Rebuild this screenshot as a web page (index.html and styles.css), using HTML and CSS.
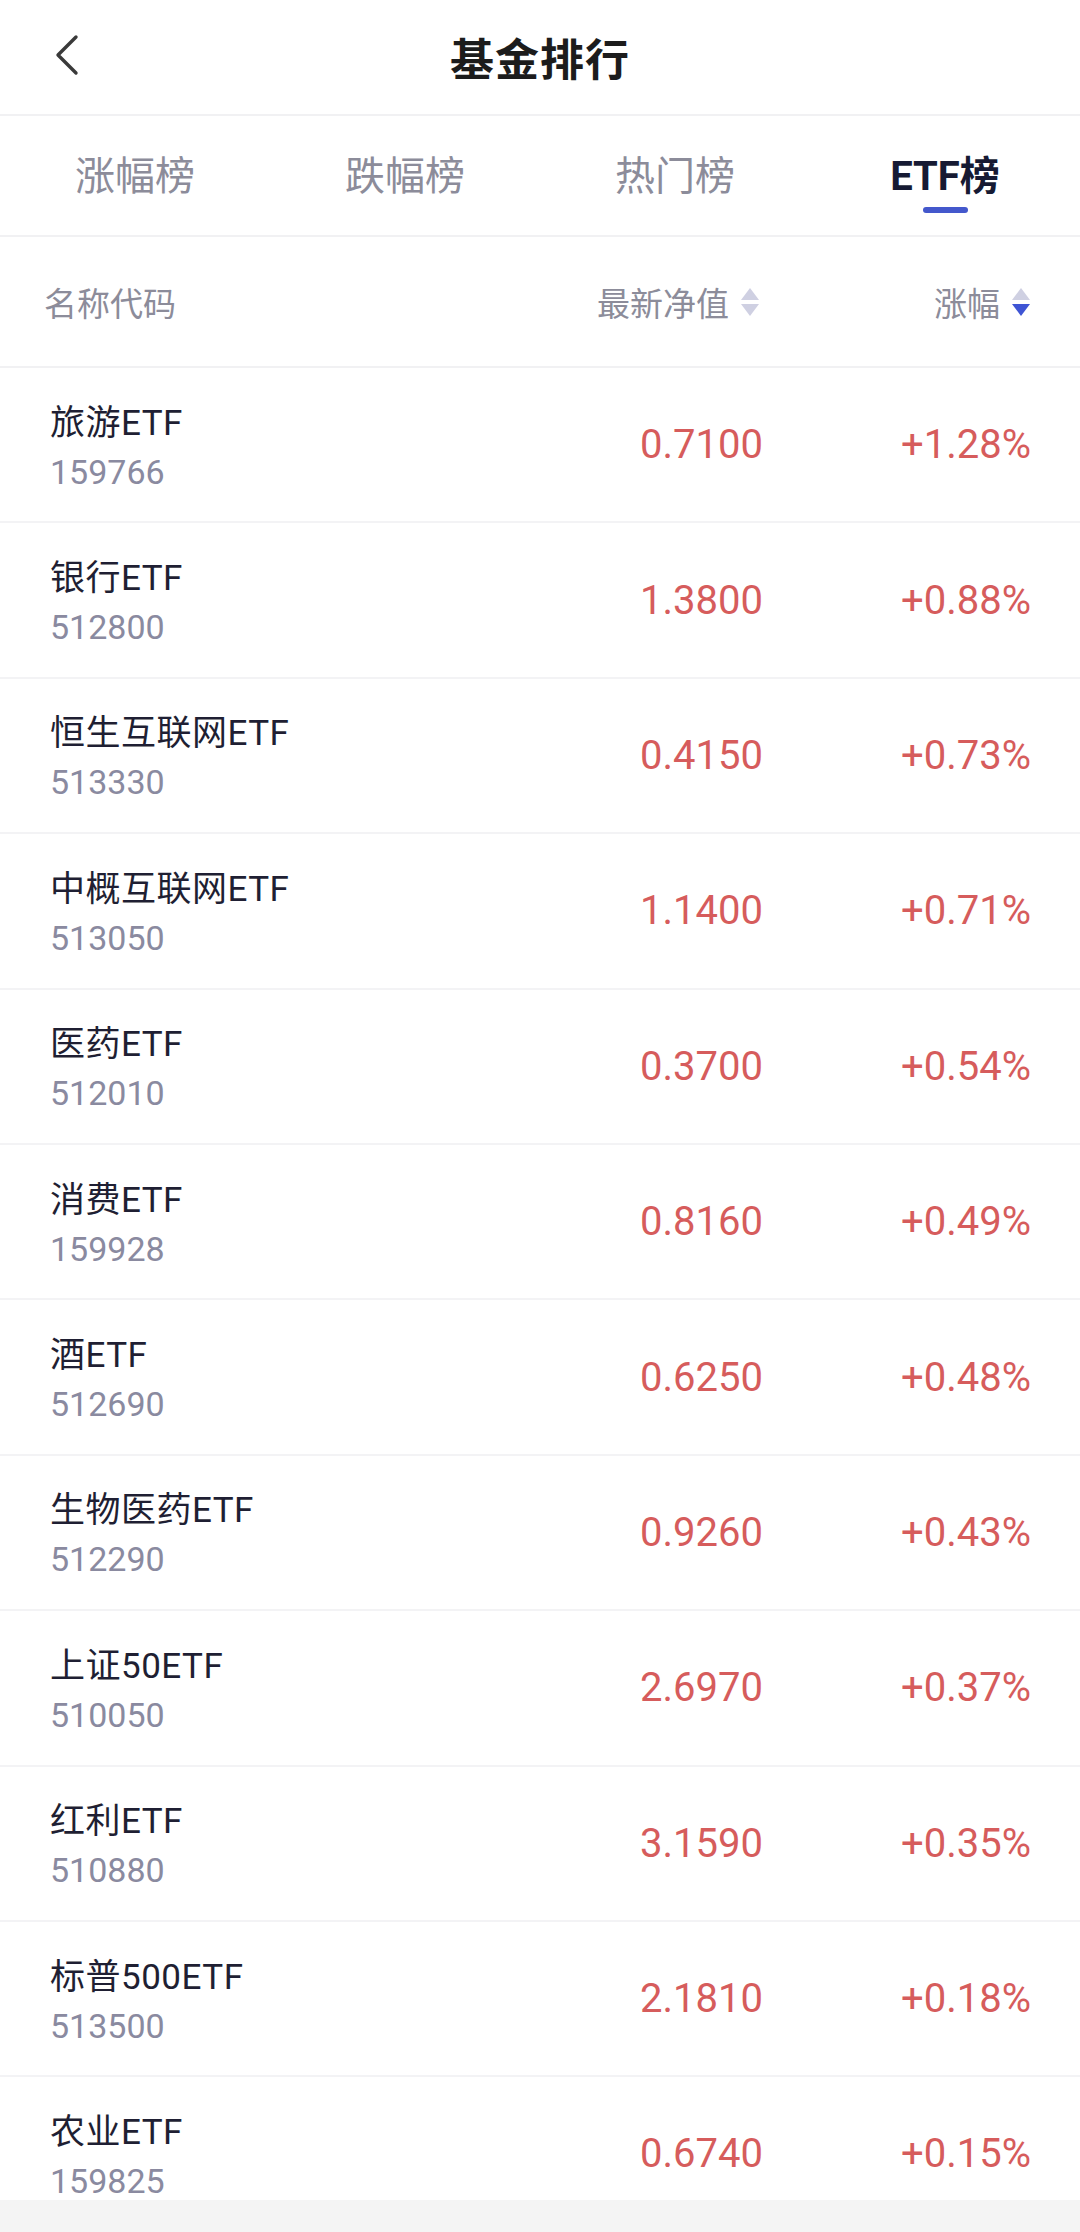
FILE: index.html
```html
<!DOCTYPE html>
<html lang="zh-CN">
<head>
<meta charset="utf-8">
<title>基金排行</title>
<link rel="stylesheet" href="styles.css">
</head>
<body>
<div class="page">
  <header class="topbar">
    <svg class="back" width="30" height="44" viewBox="0 0 30 44"><path d="M24 4 L6 22 L24 40" fill="none" stroke="#3a3a3a" stroke-width="3.4" stroke-linecap="round" stroke-linejoin="round"/></svg>
    <h1 class="title">基金排行</h1>
  </header>
  <nav class="tabs">
    <div class="tab">涨幅榜</div>
    <div class="tab">跌幅榜</div>
    <div class="tab">热门榜</div>
    <div class="tab active">ETF榜</div>
  </nav>
  <div class="colhead">
    <div class="ch-name">名称代码</div>
    <div class="ch-sort">最新净值<span class="arrows"><i class="up"></i><i class="down"></i></span></div>
    <div class="ch-sort">涨幅<span class="arrows"><i class="up"></i><i class="down on"></i></span></div>
  </div>
  <div class="list">
    <div class="row"><div class="nm"><div class="name">旅游ETF</div><div class="code">159766</div></div><div class="val">0.7100</div><div class="chg">+1.28%</div></div>
    <div class="row"><div class="nm"><div class="name">银行ETF</div><div class="code">512800</div></div><div class="val">1.3800</div><div class="chg">+0.88%</div></div>
    <div class="row"><div class="nm"><div class="name">恒生互联网ETF</div><div class="code">513330</div></div><div class="val">0.4150</div><div class="chg">+0.73%</div></div>
    <div class="row"><div class="nm"><div class="name">中概互联网ETF</div><div class="code">513050</div></div><div class="val">1.1400</div><div class="chg">+0.71%</div></div>
    <div class="row"><div class="nm"><div class="name">医药ETF</div><div class="code">512010</div></div><div class="val">0.3700</div><div class="chg">+0.54%</div></div>
    <div class="row"><div class="nm"><div class="name">消费ETF</div><div class="code">159928</div></div><div class="val">0.8160</div><div class="chg">+0.49%</div></div>
    <div class="row"><div class="nm"><div class="name">酒ETF</div><div class="code">512690</div></div><div class="val">0.6250</div><div class="chg">+0.48%</div></div>
    <div class="row"><div class="nm"><div class="name">生物医药ETF</div><div class="code">512290</div></div><div class="val">0.9260</div><div class="chg">+0.43%</div></div>
    <div class="row"><div class="nm"><div class="name">上证50ETF</div><div class="code">510050</div></div><div class="val">2.6970</div><div class="chg">+0.37%</div></div>
    <div class="row"><div class="nm"><div class="name">红利ETF</div><div class="code">510880</div></div><div class="val">3.1590</div><div class="chg">+0.35%</div></div>
    <div class="row"><div class="nm"><div class="name">标普500ETF</div><div class="code">513500</div></div><div class="val">2.1810</div><div class="chg">+0.18%</div></div>
    <div class="row"><div class="nm"><div class="name">农业ETF</div><div class="code">159825</div></div><div class="val">0.6740</div><div class="chg">+0.15%</div></div>
  </div>
  <div class="navbar"></div>
</div>
</body>
</html>
```

FILE: styles.css
```css
* { box-sizing: border-box; margin: 0; padding: 0; }
html, body { width: 1080px; height: 2232px; background: #fff; }
body { font-family: Roboto, "Noto Sans CJK SC", sans-serif; color: #1d1d2b; }
.page { width: 1080px; height: 2232px; display: flex; flex-direction: column; overflow: hidden; }

.topbar { position: relative; height: 116px; flex: none; border-bottom: 2px solid #f1f1f3; display: flex; align-items: center; justify-content: center; }
.back { position: absolute; left: 52px; top: 33px; }
.title { font-family: "Noto Sans CJK SC", sans-serif; font-size: 44px; font-weight: 700; color: #1c1c1c; letter-spacing: 1px; }

.tabs { height: 121px; flex: none; display: grid; grid-template-columns: repeat(4, 1fr); border-bottom: 2px solid #f1f1f3; }
.tab { position: relative; display: flex; align-items: center; justify-content: center; padding-bottom: 6px; font-size: 40px; color: #8c8c9a; }
.tab.active { color: #161a33; font-weight: 700; }
.tab.active::after { content: ""; position: absolute; left: 50%; top: 91px; width: 45px; height: 6px; margin-left: -22px; border-radius: 3px; background: #4458cc; }

.colhead { height: 131px; flex: none; display: grid; grid-template-columns: 1fr 230px 268px; align-items: center; padding: 0 50px 0 44px; border-bottom: 2px solid #f1f1f3; font-size: 33px; color: #8c8c9a; }
.ch-sort { display: flex; align-items: center; justify-content: flex-end; }
.ch-sort:nth-child(2) { padding-right: 3px; }
.arrows { display: flex; flex-direction: column; gap: 4px; margin-left: 12px; }
.arrows i { display: block; width: 0; height: 0; border-left: 9px solid transparent; border-right: 9px solid transparent; }
.arrows .up { border-bottom: 12px solid #cfd0e2; }
.arrows .down { border-top: 12px solid #cfd0e2; }
.arrows .down.on { border-top-color: #3f55d4; }

.list { flex: 1; overflow: hidden; }
.row { height: 155.4px; display: grid; grid-template-columns: 1fr 230px 268px; align-items: center; padding: 0 49px 0 50px; border-bottom: 2px solid #f3f3f5; }
.nm { display: flex; flex-direction: column; padding-top: 6px; }
.name { font-size: 35px; line-height: 48px; color: #1f1f33; letter-spacing: 0.5px; }
.code { font-size: 34px; line-height: 48px; color: #8a8aa0; }
.val, .chg { text-align: right; font-size: 40px; font-weight: 400; color: #d65c5c; }

.navbar { height: 32px; flex: none; background: #f4f4f4; }
```
